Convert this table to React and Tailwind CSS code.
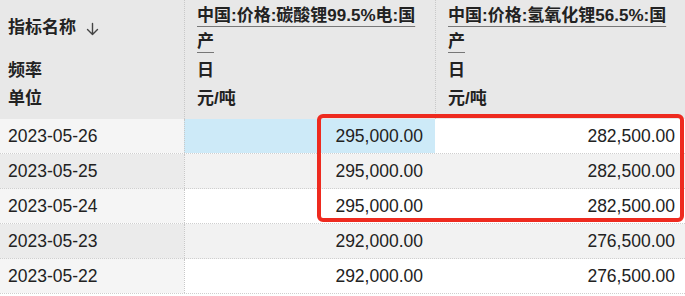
import React from "react";

const rows = [
  { d: "2023-05-26", a: "295,000.00", b: "282,500.00" },
  { d: "2023-05-25", a: "295,000.00", b: "282,500.00" },
  { d: "2023-05-24", a: "295,000.00", b: "282,500.00" },
  { d: "2023-05-23", a: "292,000.00", b: "276,500.00" },
  { d: "2023-05-22", a: "292,000.00", b: "276,500.00" },
];

const font = { fontFamily: '"Liberation Sans", "Noto Sans CJK SC", sans-serif' };

export default function App() {
  return (
    <div className="relative w-[685px] h-[296px] overflow-hidden bg-white text-[#222]" style={font}>
      <div className="grid grid-cols-[184px_251px_250px] bg-[#e8e8e8] h-[119px] font-bold text-[17px]">
        <div className="pl-2 flex flex-col">
          <div className="h-[56px] flex items-center">
            指标名称
            <svg className="ml-[10px] mt-[1px]" width="13" height="14" viewBox="0 0 13 14" fill="none" stroke="#444" strokeWidth="1.4" strokeLinecap="round" strokeLinejoin="round">
              <path d="M6.5 1.5v11M1.5 7.5l5 5 5-5" />
            </svg>
          </div>
          <div className="h-[28px] mt-[1px] flex items-center">频率</div>
          <div className="h-[28px] flex items-center">单位</div>
        </div>
        {["中国:价格:碳酸锂99.5%电:国产", "中国:价格:氢氧化锂56.5%:国产"].map((t, i) => (
          <div key={i} className="border-l border-dotted border-[#c8c8c8] pl-3 pr-3 flex flex-col">
            <div className="h-[56px] pt-[3px] leading-[26px] underline underline-offset-[5px] decoration-[#777] decoration-1">
              {t}
            </div>
            <div className="h-[28px] mt-[1px] flex items-center">日</div>
            <div className="h-[28px] flex items-center">元/吨</div>
          </div>
        ))}
      </div>
      {rows.map((r, i) => {
        const odd = i % 2 === 1;
        return (
          <div
            key={i}
            className={`grid grid-cols-[184px_251px_250px] h-[35px] text-[17.5px] border-b border-dotted border-[#cfcfcf] ${odd ? "bg-[#f2f2f2]" : "bg-white"}`}
          >
            <div className={`pl-2 flex items-center ${odd ? "bg-[#ebebeb]" : "bg-[#f5f5f5]"}`}>{r.d}</div>
            <div
              className={`border-l border-dotted border-[#c8c8c8] pr-3 flex items-center justify-end ${i === 0 ? "bg-[#cdeaf8]" : ""}`}
            >
              {r.a}
            </div>
            <div className="pr-[10px] flex items-center justify-end">{r.b}</div>
          </div>
        );
      })}
      <div className="absolute left-[317px] top-[114px] w-[367px] h-[108px] border-4 border-[#ee2a1f] rounded-md pointer-events-none" />
    </div>
  );
}
